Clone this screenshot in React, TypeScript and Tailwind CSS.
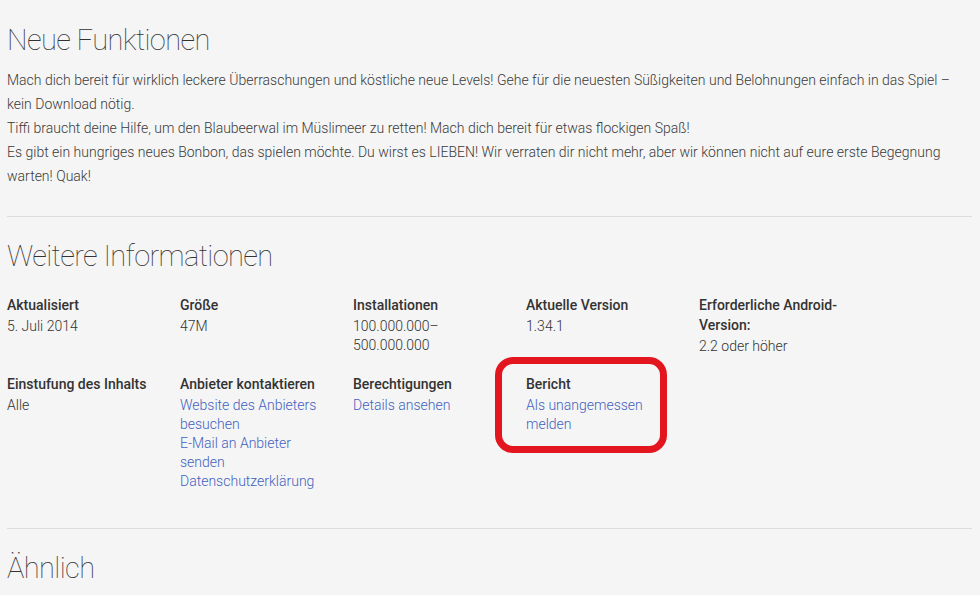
import React from "react";

const Label = ({ children }: { children: React.ReactNode }) => (
  <div className="text-[14px] leading-[20px] font-medium text-[#333]">{children}</div>
);
const Value = ({ children }: { children: React.ReactNode }) => (
  <div className="mt-[2px] text-[14px] leading-[19px] font-light text-[#333]">{children}</div>
);
const Links = ({ children }: { children: React.ReactNode }) => (
  <div className="mt-[2px] text-[14px] leading-[19px] font-light text-[#3f62c0]">{children}</div>
);

export default function App() {
  return (
    <div
      className="min-h-[595px] w-[980px] bg-[#f5f5f5] overflow-hidden"
      style={{ fontFamily: "Roboto, 'Noto Sans', sans-serif" }}
    >
      <div className="pl-[7px] w-[972px] pt-[22px]">
        <h1 className="text-[29px] leading-[36px] font-thin tracking-[-0.6px] text-[#333]">Neue Funktionen</h1>
        <div className="mt-[10px] text-[14px] leading-[24px] font-light text-[#3a3a3a]">
          <div>
            Mach dich bereit für wirklich leckere Überraschungen und köstliche neue Levels! Gehe für die neuesten Süßigkeiten und Belohnungen einfach in das Spiel – kein Download nötig.
          </div>
          <div>Tiffi braucht deine Hilfe, um den Blaubeerwal im Müslimeer zu retten! Mach dich bereit für etwas flockigen Spaß!</div>
          <div>
            Es gibt ein hungriges neues Bonbon, das spielen möchte. Du wirst es LIEBEN! Wir verraten dir nicht mehr, aber wir können nicht auf eure erste Begegnung warten! Quak!
          </div>
        </div>
        <div className="mt-[28px] h-px bg-[#dcdcdc]" />
        <h2 className="mt-[21px] text-[29px] leading-[36px] font-thin tracking-[-0.6px] text-[#333]">Weitere Informationen</h2>
        <div className="mt-[21px] grid grid-cols-[173px_173px_173px_173px_173px] gap-y-[18px]">
          <div className="pr-[20px]">
            <Label>Aktualisiert</Label>
            <Value>5. Juli 2014</Value>
          </div>
          <div className="pr-[20px]">
            <Label>Größe</Label>
            <Value>47M</Value>
          </div>
          <div className="pr-[20px]">
            <Label>Installationen</Label>
            <Value>100.000.000–500.000.000</Value>
          </div>
          <div className="pr-[20px]">
            <Label>Aktuelle Version</Label>
            <Value>1.34.1</Value>
          </div>
          <div className="pr-[20px]">
            <Label>Erforderliche Android-Version:</Label>
            <Value>2.2 oder höher</Value>
          </div>
          <div className="pr-[20px]">
            <Label>Einstufung des Inhalts</Label>
            <Value>Alle</Value>
          </div>
          <div className="pr-[20px]">
            <Label>Anbieter kontaktieren</Label>
            <Links>
              <div>Website des Anbieters besuchen</div>
              <div>E-Mail an Anbieter senden</div>
              <div>Datenschutzerklärung</div>
            </Links>
          </div>
          <div className="pr-[20px]">
            <Label>Berechtigungen</Label>
            <Links>Details ansehen</Links>
          </div>
          <div className="pr-[20px] relative">
            <Label>Bericht</Label>
            <Links>Als unangemessen melden</Links>
            <div className="absolute -left-[31px] -top-[17px] w-[172px] h-[96px] border-[7px] border-[#e3161f] rounded-[18px] pointer-events-none" />
          </div>
        </div>
        <div className="mt-[37px] h-px bg-[#dcdcdc]" />
        <h2 className="mt-[21px] text-[29px] leading-[36px] font-thin tracking-[-0.6px] text-[#333]">Ähnlich</h2>
      </div>
    </div>
  );
}
